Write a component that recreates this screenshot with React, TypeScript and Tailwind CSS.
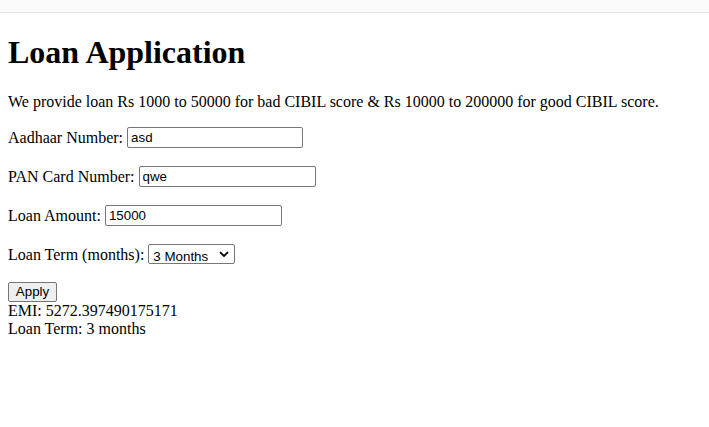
import React from "react";

export default function App() {
  const serif = "font-['Liberation_Serif',serif]";
  const ctl = "font-['Liberation_Sans',Arial,sans-serif] text-[13.333px] text-black";
  return (
    <div className={`min-h-[427px] bg-white text-black ${serif}`}>
      <div className="h-[12px] bg-[#fafafa] border-b border-[#e6e6e6] box-content" />
      <div className="px-2">
        <h1 className="mt-[21.44px] mb-[21.44px] text-[32px] font-bold leading-[37px]">Loan Application</h1>
        <p className="mt-4 mb-[15px] text-[16px] leading-[18px]">
          We provide loan Rs 1000 to 50000 for bad CIBIL score &amp; Rs 10000 to 200000 for good CIBIL score.
        </p>
        <form onSubmit={(e) => e.preventDefault()}>
          <p className="mt-[15px] mb-4 text-[16px] leading-[23px] flex items-center">
            <span>Aadhaar Number:&nbsp;</span>
            <input
              defaultValue="asd"
              className={`${ctl} w-[176px] h-[21px] px-[3px] border border-[#767676] rounded-[2px] bg-white outline-none`}
            />
          </p>
          <p className="my-4 text-[16px] leading-[23px] flex items-center">
            <span>PAN Card Number:&nbsp;</span>
            <input
              defaultValue="qwe"
              className={`${ctl} w-[177px] h-[21px] px-[3px] border border-[#767676] rounded-[2px] bg-white outline-none`}
            />
          </p>
          <p className="my-4 text-[16px] leading-[23px] flex items-center">
            <span>Loan Amount:&nbsp;</span>
            <input
              defaultValue="15000"
              className={`${ctl} w-[177px] h-[21px] px-[3px] border border-[#767676] rounded-[2px] bg-white outline-none`}
            />
          </p>
          <p className="my-4 text-[16px] leading-[23px] flex items-center">
            <span>Loan Term (months):&nbsp;</span>
            <span className="relative inline-flex items-center w-[87px] h-[20px] border border-[#767676] rounded-[2px] bg-white">
              <select
                defaultValue="3"
                className={`${ctl} appearance-none w-full h-full pl-[4px] pr-[20px] bg-transparent outline-none`}
              >
                <option value="3">3 Months</option>
                <option value="6">6 Months</option>
                <option value="12">12 Months</option>
              </select>
              <svg
                className="absolute right-[5px] top-[6px] pointer-events-none"
                width="10"
                height="7"
                viewBox="0 0 10 7"
              >
                <path d="M1 1.2 L5 5 L9 1.2" fill="none" stroke="#000" strokeWidth="1.8" />
              </svg>
            </span>
          </p>
          <button
            type="submit"
            className={`${ctl} flex items-center justify-center w-[49px] h-[20px] bg-[#efefef] border border-[#767676] rounded-[2px]`}
          >
            Apply
          </button>
        </form>
        <div className="text-[16px] leading-[18px]">
          <div>EMI: 5272.397490175171</div>
          <div>Loan Term: 3 months</div>
        </div>
      </div>
    </div>
  );
}
